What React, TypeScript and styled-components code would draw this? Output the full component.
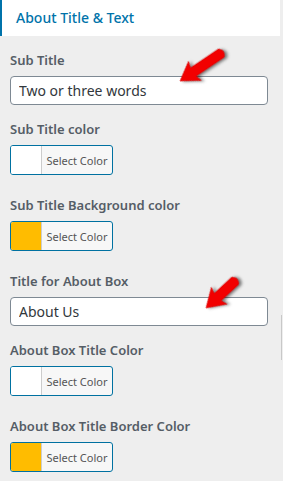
import { FC } from 'react';
import { createGlobalStyle, styled } from 'styled-components';

const GlobalStyle = createGlobalStyle`
  html, body {
    margin: 0;
    padding: 0;
    background: #eeeeee;
  }
  body {
    font-family: 'Noto Sans', 'Open Sans', sans-serif;
    overflow: hidden;
  }
`;

type Field =
  | { kind: 'text'; label: string; value: string }
  | { kind: 'color'; label: string; swatch: string };

const fields: Field[] = [
  { kind: 'text', label: 'Sub Title', value: 'Two or three words' },
  { kind: 'color', label: 'Sub Title color', swatch: '#ffffff' },
  { kind: 'color', label: 'Sub Title Background color', swatch: '#ffbc00' },
  { kind: 'text', label: 'Title for About Box', value: 'About Us' },
  { kind: 'color', label: 'About Box Title Color', swatch: '#ffffff' },
  { kind: 'color', label: 'About Box Title Border Color', swatch: '#ffbc00' },
];

const Arrow: FC<{ x: number; y: number; length: number; angle: number }> = (
  props
) => {
  const l = props.length;
  return (
    <ArrowSvg
      width={l + 24}
      height={l + 24}
      viewBox={`-12 -12 ${l + 24} ${l + 24}`}
      style={{
        left: props.x - 12,
        top: props.y - 12,
        transform: `rotate(${props.angle}deg)`,
        transformOrigin: '12px 12px',
      }}
    >
      <path
        d={`M0 0 L18 -11.5 L16 -5 L${l} -5 Q${l + 5} 0 ${l} 5 L16 5 L18 11.5 Z`}
        fill="#f20000"
        stroke="#d80000"
        strokeWidth="0.6"
        strokeLinejoin="round"
      />
    </ArrowSvg>
  );
};

export default function App() {
  return (
    <Page>
      <GlobalStyle />
      <Panel>
        <Header>About Title &amp; Text</Header>
        <Body>
          {fields.map((f) => (
            <Control key={f.label} $after={f.kind === 'text' ? 15 : 21}>
              <Label>{f.label}</Label>
              {f.kind === 'text' ? (
                <TextInput defaultValue={f.value} />
              ) : (
                <ColorButton>
                  <Swatch $color={f.swatch} />
                  <ColorText>Select Color</ColorText>
                </ColorButton>
              )}
            </Control>
          ))}
        </Body>
      </Panel>
      <Gutter>
        <ScrollLine />
      </Gutter>
      <Arrow x={180} y={81} length={50} angle={-34} />
      <Arrow x={206} y={308} length={40} angle={-43} />
    </Page>
  );
}

const Page = styled.div`
  position: relative;
  display: flex;
  width: 283px;
  height: 481px;
  overflow: hidden;
  background: #eeeeee;
`;

const Panel = styled.div`
  width: 280px;
  flex-shrink: 0;
  display: flex;
  flex-direction: column;
`;

const Header = styled.div`
  flex-shrink: 0;
  height: 35px;
  display: flex;
  align-items: center;
  padding-left: 14px;
  padding-bottom: 1px;
  border-left: 2px solid #0073aa;
  background: #ffffff;
  color: #0073aa;
  font-size: 14px;
  font-weight: 500;
`;

const Body = styled.div`
  display: flex;
  flex-direction: column;
  padding: 15px 10px 0;
`;

const Control = styled.div<{ $after: number }>`
  flex-shrink: 0;
  display: flex;
  flex-direction: column;
  align-items: flex-start;
  gap: 7px;
  margin-bottom: ${(p) => p.$after}px;
`;

const Label = styled.div`
  font-size: 13px;
  line-height: 18px;
  font-weight: 600;
  color: #555d66;
`;

const TextInput = styled.input`
  box-sizing: border-box;
  width: 258px;
  height: 29px;
  padding: 0 8px;
  border: 1px solid #7e8993;
  border-radius: 4px;
  background: #ffffff;
  font-family: inherit;
  font-size: 14px;
  color: #32373c;
  outline: none;
`;

const ColorButton = styled.div`
  box-sizing: border-box;
  display: flex;
  width: 103px;
  height: 30px;
  border: 1px solid #0071a1;
  border-radius: 3px;
  overflow: hidden;
  background: #f7f7f7;
`;

const Swatch = styled.div<{ $color: string }>`
  width: 30px;
  background: ${(p) => p.$color};
  border-right: 1px solid #cccccc;
`;

const ColorText = styled.div`
  flex: 1;
  display: flex;
  align-items: center;
  justify-content: center;
  font-size: 11px;
  color: #555555;
`;

const Gutter = styled.div`
  flex: 1;
  display: flex;
  justify-content: center;
  padding-top: 315px;
`;

const ScrollLine = styled.div`
  width: 1px;
  height: 45px;
  background: #c8c8c8;
`;

const ArrowSvg = styled.svg`
  position: absolute;
  overflow: visible;
  filter: drop-shadow(2px 2px 1.5px rgba(0, 0, 0, 0.5));
`;
